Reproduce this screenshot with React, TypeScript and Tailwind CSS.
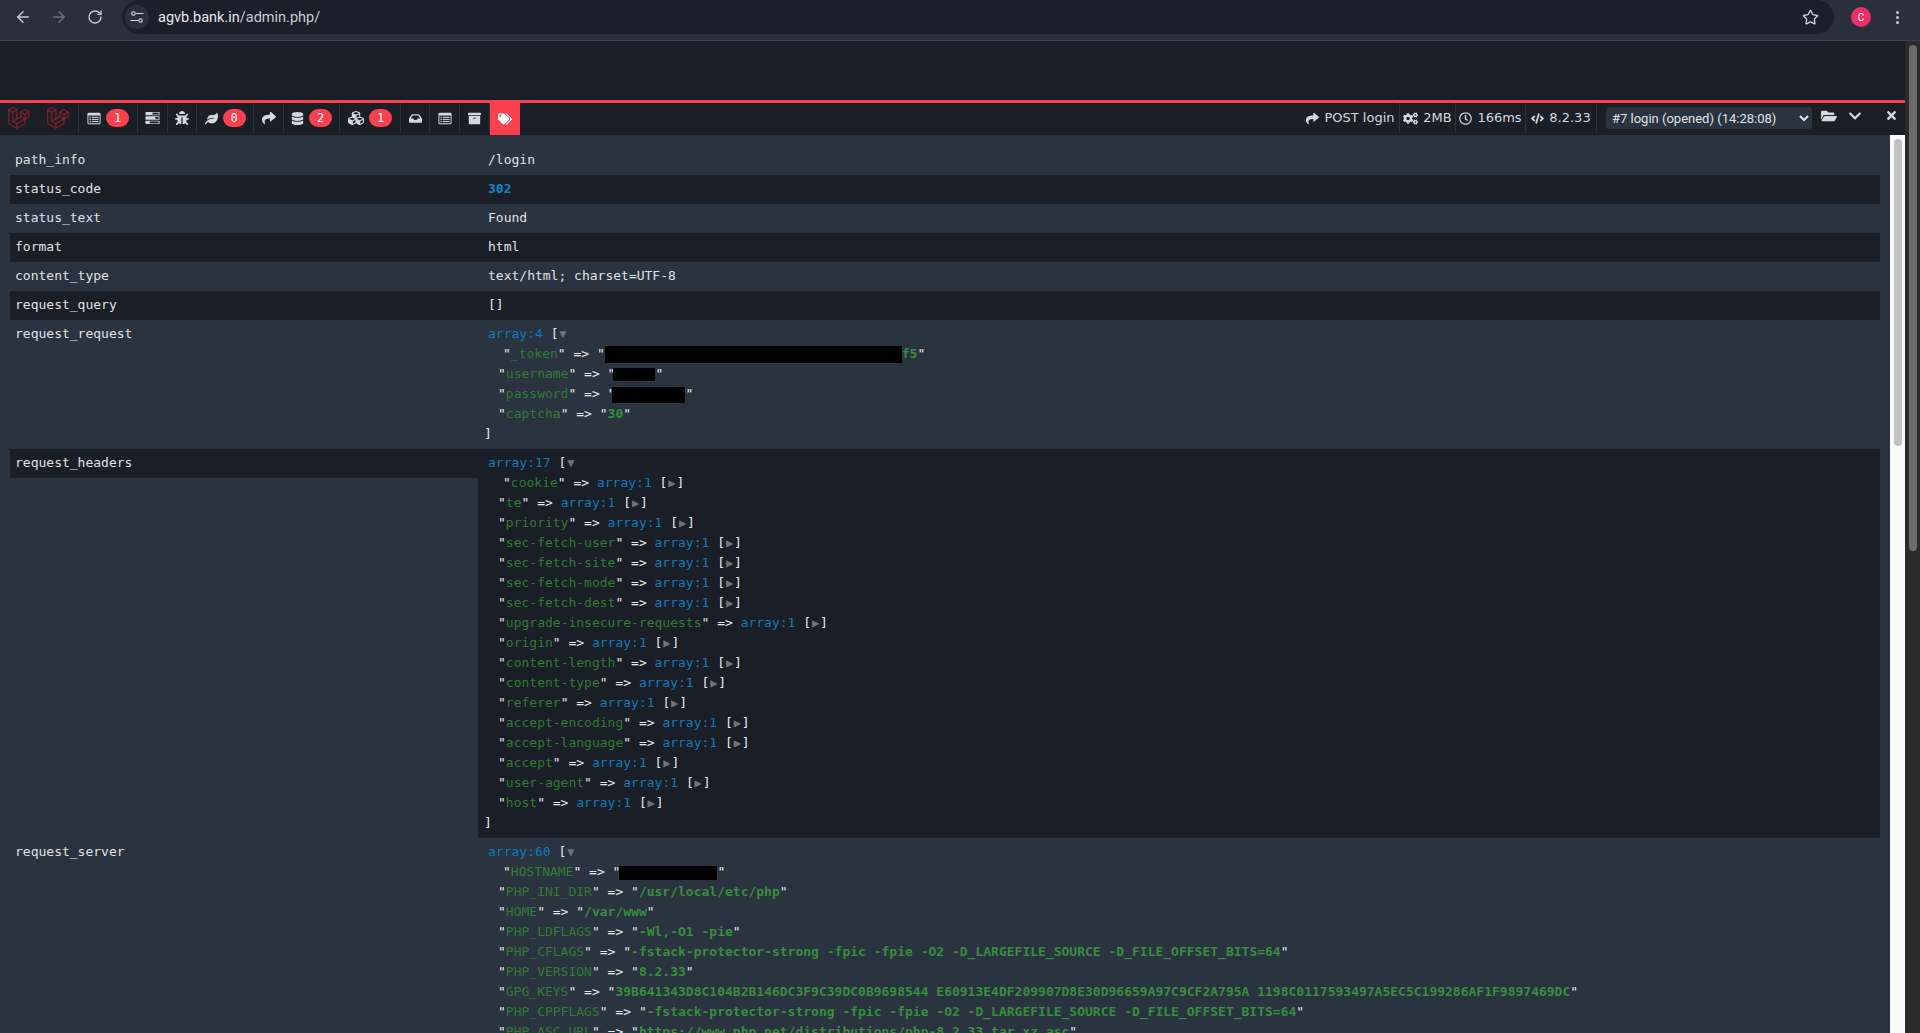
import React from "react";
import { ArrowLeft, ArrowRight, RotateCw, Star } from "lucide-react";
import {
  FaBug, FaLeaf, FaShare, FaDatabase, FaCubes, FaInbox, FaArchive, FaTags,
  FaCogs, FaRegClock, FaCode, FaFolderOpen, FaChevronDown, FaTimes,
} from "react-icons/fa";

const Laravel = () => (
  <svg viewBox="0 0 50 52" className="w-[22px] h-[22px]" fill="none" stroke="#b51f2b" strokeWidth="2" strokeLinejoin="round" strokeLinecap="round">
    <path d="M.8 6.3 10.4.8 20 6.3 10.4 11.8Z" />
    <path d="M.8 6.3V39.2L19.9 50.2 39.2 39.2V28.3" />
    <path d="M10.4 11.8V33.9L19.9 39.3 39.2 28.3" />
    <path d="M20 6.3V27.9" />
    <path d="M19.9 39.3V50.2" />
    <path d="M10.4 33.9 29.6 22.8" />
    <path d="M29.6 11.8 39.2 6.3 48.8 11.8 39.2 17.3Z" />
    <path d="M29.6 11.8V22.8L39.2 28.3 48.8 22.8V11.8" />
    <path d="M39.2 17.3V28.3" />
  </svg>
);

const Tasks = () => (
  <svg viewBox="0 0 16 14" className="w-[15px] h-[14px]" fill="#d5d8dd">
    <rect x="0.5" y="0.5" width="15" height="3.6" rx="0.6" />
    <rect x="0.5" y="5.2" width="15" height="3.6" rx="0.6" />
    <rect x="0.5" y="9.9" width="15" height="3.6" rx="0.6" />
    <rect x="8" y="1.3" width="6.5" height="2" fill="#1a1e27" />
    <rect x="11" y="6" width="3.5" height="2" fill="#1a1e27" />
    <rect x="5" y="10.7" width="9.5" height="2" fill="#1a1e27" />
  </svg>
);

const ListAlt = () => (
  <svg viewBox="0 0 16 14" className="w-[14px] h-[13px]">
    <rect x="0.5" y="0.5" width="15" height="13" rx="1.5" fill="#d5d8dd" />
    <rect x="1.6" y="3.6" width="12.8" height="8.8" fill="#1f232c" />
    <rect x="2.8" y="5" width="1.6" height="1.2" fill="#d5d8dd" />
    <rect x="2.8" y="7.4" width="1.6" height="1.2" fill="#d5d8dd" />
    <rect x="2.8" y="9.8" width="1.6" height="1.2" fill="#d5d8dd" />
    <rect x="5.4" y="5" width="7.8" height="1.2" fill="#d5d8dd" />
    <rect x="5.4" y="7.4" width="7.8" height="1.2" fill="#d5d8dd" />
    <rect x="5.4" y="9.8" width="7.8" height="1.2" fill="#d5d8dd" />
  </svg>
);

const Tune = () => (
  <svg viewBox="0 0 16 16" className="w-[14px] h-[14px]" fill="none" stroke="#d7dae0" strokeWidth="1.3" strokeLinecap="round">
    <circle cx="4" cy="4" r="2" />
    <path d="M7.5 4H15" />
    <circle cx="12" cy="12" r="2" />
    <path d="M1 12H8.5" />
  </svg>
);

const Badge = ({ n }: { n: string }) => (
  <span className="inline-flex items-center justify-center h-[18px] w-[23px] rounded-full bg-[#f9404f] text-white text-[12px] font-['DejaVu_Sans_Mono',monospace]">{n}</span>
);

const Tab = ({ w, children }: { w: string; children: React.ReactNode }) => (
  <div className={`${w} h-[30px] flex items-center justify-center gap-[5px] border-r border-[#2c333f] text-[#d5d8dd]`}>{children}</div>
);

const Stat = ({ w, icon, text }: { w: string; icon: React.ReactNode; text: string }) => (
  <div className={`${w} h-[30px] flex items-center justify-center gap-[5px] border-r border-[#2c333f] text-[#d5d8dd]`}>
    {icon}
    <span>{text}</span>
  </div>
);

const Q = ({ children }: { children: React.ReactNode }) => <span className="text-[#e8eaed]">{children}</span>;
const K = ({ k }: { k: string }) => (
  <>
    <Q>"</Q>
    <span className="text-[#2f7d32]">{k}</span>
    <Q>"</Q> <Q>=&gt;</Q>{" "}
  </>
);
const Str = ({ children }: { children: React.ReactNode }) => (
  <>
    <Q>"</Q>
    <span className="text-[#388e3c] font-bold">{children}</span>
    <Q>"</Q>
  </>
);
const Arr = ({ n }: { n: number }) => <span className="text-[#0f7cba]">array:{n}</span>;
const Closed = () => (
  <>
    <Arr n={1} /> <Q>[</Q>
    <span className="inline-block w-[9px] text-center text-[#6f7378] text-[12px] leading-[20px]">▶</span>
    <Q>]</Q>
  </>
);
const Open = ({ n }: { n: number }) => (
  <div className="pl-[10px] h-[20px] overflow-hidden">
    <Arr n={n} /> <Q>[</Q>
    <span className="inline-block w-[9px] text-center text-[#6f7378] text-[12px] leading-[20px]">▼</span>
  </div>
);
const Entry = ({ first, children }: { first?: boolean; children: React.ReactNode }) => (
  <div className={`h-[20px] ${first ? "pl-[25px]" : "pl-[20px]"}`}>{children}</div>
);
const End = () => <div className="pl-[6px] h-[20px] text-[#e8eaed]">]</div>;
const Black = ({ cls }: { cls: string }) => <span className={`inline-block ${cls} bg-black align-middle`} />;

const Row = ({ name, dark, children }: { name: string; dark?: boolean; children: React.ReactNode }) => (
  <div className="flex">
    <div className={`w-[468px] h-[29px] self-start shrink-0 pl-[5px] pt-[4px] pb-[5px] text-[#e0e2e6] ${dark ? "bg-[#1a1e27]" : ""}`}>{name}</div>
    <div className={`flex-1 min-w-0 pt-[4px] pb-[5px] whitespace-pre ${dark ? "bg-[#1a1e27]" : ""}`}>{children}</div>
  </div>
);
const Val = ({ children }: { children: React.ReactNode }) => <div className="pl-[10px] text-[#e0e2e6]">{children}</div>;

const headers = [
  "cookie", "te", "priority", "sec-fetch-user", "sec-fetch-site", "sec-fetch-mode", "sec-fetch-dest",
  "upgrade-insecure-requests", "origin", "content-length", "content-type", "referer", "accept-encoding",
  "accept-language", "accept", "user-agent", "host",
];

const flags = "-fstack-protector-strong -fpic -fpie -O2 -D_LARGEFILE_SOURCE -D_FILE_OFFSET_BITS=64";

export default function App() {
  return (
    <div className="h-screen w-full overflow-hidden flex flex-col bg-[#1a1e27]">
      {/* browser chrome */}
      <div className="h-[41px] shrink-0 bg-[#2a303b] border-b border-[#3c424d] flex items-start font-['Roboto',sans-serif]">
        <div className="w-[122px] h-[34px] flex items-center shrink-0 pl-[14px] gap-[18px]">
          <ArrowLeft size={18} color="#c5c9d0" strokeWidth={2} />
          <ArrowRight size={18} color="#6a707b" strokeWidth={2} />
          <RotateCw size={16} color="#c5c9d0" strokeWidth={2} className="ml-[1px]" />
        </div>
        <div className="flex-1 h-[34px] rounded-full bg-[#1b1f29] flex items-center pl-[3px] pr-[15px]">
          <div className="w-[24px] h-[24px] rounded-full bg-[#2a303b] flex items-center justify-center"><Tune /></div>
          <span className="ml-[9px] mt-[1px] text-[14.5px] text-[#e6e8ec]">
            agvb.bank.in<span className="text-[#c8ccd3]">/admin.php/</span>
          </span>
          <div className="flex-1" />
          <Star size={17} color="#d5d8dd" strokeWidth={1.8} />
        </div>
        <div className="w-[86px] h-[34px] shrink-0 flex items-center pl-[17px]">
          <div className="w-[20px] h-[20px] rounded-full bg-[#ec2f6b] text-white text-[10px] flex items-center justify-center">C</div>
          <div className="ml-[25px] flex flex-col gap-[2px]">
            <span className="w-[3px] h-[3px] rounded-full bg-[#c5c9d0]" />
            <span className="w-[3px] h-[3px] rounded-full bg-[#c5c9d0]" />
            <span className="w-[3px] h-[3px] rounded-full bg-[#c5c9d0]" />
          </div>
        </div>
      </div>

      <div className="flex-1 min-h-0 flex">
        <div className="flex-1 min-w-0 flex flex-col">
          <div className="h-[59px] shrink-0" />
          {/* debugbar header */}
          <div className="h-[35px] shrink-0 border-t-[3px] border-[#f9404f] bg-[#1a1e27] flex items-start text-[13px] font-['DejaVu_Sans',sans-serif]">
            <div className="w-[79px] h-[30px] shrink-0 flex items-center pl-[8px] gap-[17px] border-r border-[#2c333f]">
              <Laravel />
              <Laravel />
            </div>
            <Tab w="w-[59px]"><ListAlt /><Badge n="1" /></Tab>
            <Tab w="w-[30px]"><Tasks /></Tab>
            <Tab w="w-[29px]"><FaBug size={14} /></Tab>
            <Tab w="w-[57px]"><FaLeaf size={13} /><Badge n="0" /></Tab>
            <Tab w="w-[30px]"><FaShare size={14} /></Tab>
            <Tab w="w-[56px]"><FaDatabase size={13} /><Badge n="2" /></Tab>
            <Tab w="w-[61px]"><FaCubes size={16} /><Badge n="1" /></Tab>
            <Tab w="w-[29px]"><FaInbox size={13} /></Tab>
            <Tab w="w-[30px]"><ListAlt /></Tab>
            <Tab w="w-[30px]"><FaArchive size={13} /></Tab>
            <div className="w-[30px] h-[32px] bg-[#f9404f] flex items-center justify-center text-white"><FaTags size={14} /></div>
            <div className="flex-1" />
            <Stat w="w-[98px]" icon={<FaShare size={13} />} text="POST login" />
            <Stat w="w-[56px]" icon={<FaCogs size={15} />} text="2MB" />
            <Stat w="w-[70px]" icon={<FaRegClock size={13} />} text="166ms" />
            <Stat w="w-[71px]" icon={<FaCode size={13} />} text="8.2.33" />
            <select className="ml-[9px] mt-[4px] w-[206px] h-[22px] rounded-[3px] bg-[#2a3340] text-[#e0e2e6] text-[13px] pl-[2px] outline-none border-none font-['Roboto',sans-serif]">
              <option>#7 login (opened) (14:28:08)</option>
            </select>
            <div className="w-[93px] h-[30px] flex items-center text-[#d5d8dd] pl-[9px]">
              <FaFolderOpen size={16} className="-mt-[4px]" />
              <FaChevronDown size={14} className="ml-[11px] -mt-[4px]" />
              <FaTimes size={13} className="ml-[23px] -mt-[6px]" />
            </div>
          </div>
          {/* panel */}
          <div className="flex-1 min-h-0 flex bg-[#2a3340] overflow-hidden">
            <div className="flex-1 min-w-0 pl-[10px] pr-[10px] pt-[11px] overflow-hidden text-[13px] leading-[20px] font-['DejaVu_Sans_Mono',monospace]">
              <Row name="path_info"><Val>/login</Val></Row>
              <Row name="status_code" dark><div className="pl-[10px] text-[#0f85c9] font-bold">302</div></Row>
              <Row name="status_text"><Val>Found</Val></Row>
              <Row name="format" dark><Val>html</Val></Row>
              <Row name="content_type"><Val>text/html; charset=UTF-8</Val></Row>
              <Row name="request_query" dark><Val>[]</Val></Row>
              <Row name="request_request">
                <Open n={4} />
                <Entry first>
                  <K k="_token" /><Q>"</Q><Black cls="w-[297px] h-[17px]" /><span className="text-[#388e3c] font-bold">f5</span><Q>"</Q>
                </Entry>
                <Entry><K k="username" /><Q>"</Q><Black cls="w-[42px] h-[13px] -ml-[2px]" /><Q>"</Q></Entry>
                <Entry><K k="password" /><Q>"</Q><Black cls="w-[73px] h-[16px] -ml-[3px]" /><Q>"</Q></Entry>
                <Entry><K k="captcha" /><Str>30</Str></Entry>
                <End />
              </Row>
              <Row name="request_headers" dark>
                <Open n={17} />
                {headers.map((h, i) => (
                  <Entry key={h} first={i === 0}><K k={h} /><Closed /></Entry>
                ))}
                <End />
              </Row>
              <Row name="request_server">
                <Open n={60} />
                <Entry first><K k="HOSTNAME" /><Q>"</Q><Black cls="w-[98px] h-[14px] -ml-[1px]" /><Q>"</Q></Entry>
                <Entry><K k="PHP_INI_DIR" /><Str>/usr/local/etc/php</Str></Entry>
                <Entry><K k="HOME" /><Str>/var/www</Str></Entry>
                <Entry><K k="PHP_LDFLAGS" /><Str>-Wl,-O1 -pie</Str></Entry>
                <Entry><K k="PHP_CFLAGS" /><Str>{flags}</Str></Entry>
                <Entry><K k="PHP_VERSION" /><Str>8.2.33</Str></Entry>
                <Entry><K k="GPG_KEYS" /><Str>39B641343D8C104B2B146DC3F9C39DC0B9698544 E60913E4DF209907D8E30D96659A97C9CF2A795A 1198C0117593497A5EC5C199286AF1F9897469DC</Str></Entry>
                <Entry><K k="PHP_CPPFLAGS" /><Str>{flags}</Str></Entry>
                <Entry><K k="PHP_ASC_URL" /><Str>https://www.php.net/distributions/php-8.2.33.tar.xz.asc</Str></Entry>
              </Row>
            </div>
            <div className="w-[15px] shrink-0 bg-[#fafafa] flex justify-center">
              <div className="mt-[4px] w-[8px] h-[307px] rounded-full bg-[#c1c1c1]" />
            </div>
          </div>
        </div>
        {/* page scrollbar */}
        <div className="w-[15px] shrink-0 bg-[#2b2b2b] flex justify-center">
          <div className="mt-[4px] w-[8px] h-[506px] rounded-full bg-[#6b6b6b]" />
        </div>
      </div>
    </div>
  );
}
